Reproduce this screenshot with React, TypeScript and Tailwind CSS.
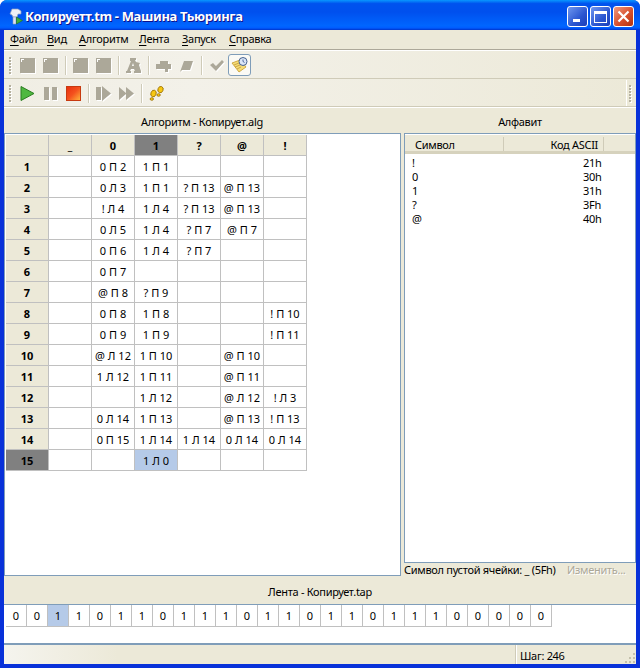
import type { ReactNode } from "react";

const font = "[font-family:'DejaVu_Sans',Tahoma,sans-serif]";

const columns = ["_", "0", "1", "?", "@", "!"];

const rows: string[][] = [
  ["", "0 П 2", "1 П 1", "", "", ""],
  ["", "0 Л 3", "1 П 1", "? П 13", "@ П 13", ""],
  ["", "! Л 4", "1 Л 4", "? П 13", "@ П 13", ""],
  ["", "0 Л 5", "1 Л 4", "? П 7", "@ П 7", ""],
  ["", "0 П 6", "1 Л 4", "? П 7", "", ""],
  ["", "0 П 7", "", "", "", ""],
  ["", "@ П 8", "? П 9", "", "", ""],
  ["", "0 П 8", "1 П 8", "", "", "! П 10"],
  ["", "0 П 9", "1 П 9", "", "", "! П 11"],
  ["", "@ Л 12", "1 П 10", "", "@ П 10", ""],
  ["", "1 Л 12", "1 П 11", "", "@ П 11", ""],
  ["", "", "1 Л 12", "", "@ Л 12", "! Л 3"],
  ["", "0 Л 14", "1 П 13", "", "@ П 13", "! П 13"],
  ["", "0 П 15", "1 Л 14", "1 Л 14", "0 Л 14", "0 Л 14"],
  ["", "", "1 Л 0", "", "", ""],
];

const alphabet = [
  ["!", "21h"],
  ["0", "30h"],
  ["1", "31h"],
  ["?", "3Fh"],
  ["@", "40h"],
];

const tape = "00110110111011011011100000".split("");

const menu = ["Файл", "Вид", "Алгоритм", "Лента", "Запуск", "Справка"];
const menuWidths = ["w-[37px]", "w-[32px]", "w-[60px]", "w-[43px]", "w-[47px]", "w-[50px]"];

function Grip() {
  return (
    <div className="flex w-[3px] flex-col gap-[1px] py-[1px]">
      {Array.from({ length: 6 }).map((_, i) => (
        <div key={i} className="h-[2px] w-[2px] bg-[#b5b19f] shadow-[1px_1px_0_#fff]" />
      ))}
    </div>
  );
}

function Sep() {
  return <div className="mx-[3px] h-[19px] w-[1px] bg-[#cfcbb8] shadow-[1px_0_0_#fff]" />;
}

function Slot({ children }: { children: ReactNode }) {
  return <div className="flex h-[22px] w-[23px] items-center justify-center">{children}</div>;
}

function Disabled({ d, notch }: { d: string; notch?: boolean }) {
  return (
    <svg width="15" height="15" viewBox="0 0 15 15" className="overflow-visible drop-shadow-[1px_1px_0_#fff]">
      <path d={d} fill="#aca899" />
      {notch && <path d="M1 1h3v1H2v2H1z" fill="#fff" />}
    </svg>
  );
}

const blank = "M0 0H15V15H0Z";

function Toolbar({ children }: { children: ReactNode }) {
  return (
    <div className="flex h-[28px] items-center border-b border-[#cfcbb8] bg-[linear-gradient(90deg,#f0eee4_0%,#f3f1e9_30%,#ece9d8_100%)] pt-[1px] pl-[5px]">
      <div className="mr-[4px]">
        <Grip />
      </div>
      {children}
    </div>
  );
}

function Cell({ children, className = "" }: { children?: ReactNode; className?: string }) {
  return (
    <div className={`flex items-center justify-center border-r border-b border-[#c0c0c0] text-[11px] tracking-normal whitespace-nowrap ${className}`}>
      {children}
    </div>
  );
}

export default function App() {
  return (
    <div className={`${font} h-[668px] w-[640px] overflow-hidden rounded-t-[7px] bg-[#0831d9] text-[11px] leading-none tracking-[-0.3px] text-black`}>
      {/* Title bar */}
      <div className="flex h-[30px] items-center bg-[linear-gradient(180deg,#0997ff_0,#0053ee_12%,#0050ee_40%,#0066ff_86%,#005bff_94%,#003dd7_97%,#003dd7_100%)] pt-[3px] pr-[6px] pl-[7px]">
        <svg width="18" height="18" viewBox="0 0 18 18">
          <path d="M5 1h6l3 2v3h-3l-1 3H6L5 7 3 6z" fill="#eef0f6" stroke="#8f9fc0" strokeWidth="0.7" />
          <path d="M6 9h3v7H6z" fill="#dfe3ee" stroke="#8f9fc0" strokeWidth="0.6" />
          <path d="M9.5 9l6 3.5-6 3.5z" fill="#3fae3a" stroke="#1e6e1e" strokeWidth="0.6" />
        </svg>
        <span className="text-[13px] font-bold tracking-[-0.35px] text-white [text-shadow:1px_1px_0_#0f1089]">
          Копируетт.tm - Машина Тьюринга
        </span>
        <div className="ml-auto flex gap-[2px]">
          <div className="flex h-[21px] w-[21px] items-end rounded-[3px] border border-white bg-[linear-gradient(135deg,#6f97ef,#2a55d0_60%,#1c3fb8)] pb-[4px] pl-[5px]">
            <div className="h-[3px] w-[7px] bg-white" />
          </div>
          <div className="flex h-[21px] w-[21px] items-center justify-center rounded-[3px] border border-white bg-[linear-gradient(135deg,#6f97ef,#2a55d0_60%,#1c3fb8)]">
            <div className="h-[12px] w-[13px] border border-t-[3px] border-white" />
          </div>
          <div className="flex h-[21px] w-[21px] items-center justify-center rounded-[3px] border border-white bg-[linear-gradient(135deg,#ee9a80,#d8502e_55%,#b3320f)]">
            <svg width="13" height="13" viewBox="0 0 13 13">
              <path d="M1.5 1.5l10 10M11.5 1.5l-10 10" stroke="#fff" strokeWidth="2.2" />
            </svg>
          </div>
        </div>
      </div>

      <div className="mx-[4px] flex h-[634px] flex-col bg-[#ece9d8]">
        {/* Menu */}
        <div className="flex h-[20px] items-center border-b border-[#aca899] pb-[2px] pl-[6px] shadow-[0_1px_0_#fff]">
          {menu.map((m, i) => (
            <span key={m} className={menuWidths[i]}>
              <span className="underline underline-offset-2">{m[0]}</span>
              {m.slice(1)}
            </span>
          ))}
        </div>
        <div className="h-[1px]" />

        <Toolbar>
          <Slot><Disabled d={blank} notch /></Slot>
          <Slot><Disabled d={blank} notch /></Slot>
          <Sep />
          <Slot><Disabled d={blank} notch /></Slot>
          <Slot><Disabled d={blank} notch /></Slot>
          <Sep />
          <Slot>
            <Disabled d="M4 0h6v2H9l1 2 4 1-1 2 2 6v2H8v-2h1l-1-2H5l-1 2h1v2H0v-2h1L5 3H4z M6 8h2L7 5z" />
          </Slot>
          <Sep />
          <Slot><Disabled d="M4 3h8v3h3v5h-3v3H9v-3H0V6h4z" /></Slot>
          <Slot><Disabled d="M5 3h9L11 12H3L1 14z" /></Slot>
          <Sep />
          <Slot><Disabled d="M1 7l3-2 3 3 6-6 2 2-8 9z" /></Slot>
          <div className="flex h-[22px] w-[23px] items-center justify-center rounded-[3px] border border-[#7f9db9] bg-[#fbfaf5]">
            <svg width="17" height="17" viewBox="0 0 17 17">
              <path d="M1 6l8-3 6 7-7 5z" fill="#f6dc74" stroke="#c79a2c" strokeWidth="0.8" />
              <path d="M3 8l5-2M4 10l5-2M6 12l4-2" stroke="#b98f30" strokeWidth="0.7" />
              <circle cx="12" cy="4.5" r="4" fill="#dbe6f6" stroke="#46618f" strokeWidth="1" />
              <path d="M12 2.5v2l1.5 1" stroke="#2c4a88" strokeWidth="0.8" fill="none" />
            </svg>
          </div>
        </Toolbar>

        <Toolbar>
          <Slot>
            <svg width="15" height="15" viewBox="0 0 15 15">
              <path d="M1 0.5L14 7.5 1 14.5z" fill="#4fb840" stroke="#2a7c20" />
            </svg>
          </Slot>
          <Slot><Disabled d="M1 1h5v13H1z M9 1h5v13H9z" /></Slot>
          <Slot>
            <div className="h-[15px] w-[15px] border border-[#c73a10] bg-[linear-gradient(135deg,#e8300f,#f4511e_50%,#ffb13a)]" />
          </Slot>
          <Sep />
          <Slot><Disabled d="M0 1h5v13H0z M6 0l9 7.5L6 15z" /></Slot>
          <Slot><Disabled d="M0 1l7 6V1l8 6.5L7 14V8l-7 6z" /></Slot>
          <Sep />
          <Slot>
            <svg width="15" height="15" viewBox="0 0 15 15">
              <g fill="#f7c812" stroke="#9a6f05" strokeWidth="0.8">
                <ellipse cx="4.5" cy="7.5" rx="2.6" ry="3.4" transform="rotate(20 4.5 7.5)" />
                <ellipse cx="2.8" cy="13" rx="1.7" ry="1.3" />
                <ellipse cx="11.5" cy="3.6" rx="2.6" ry="3.2" transform="rotate(20 11.5 3.6)" />
                <ellipse cx="9.6" cy="9" rx="1.7" ry="1.3" />
              </g>
            </svg>
          </Slot>
          <div className="mr-[4px] ml-auto flex h-full items-center border-l border-white pl-[2px]">
            <Grip />
          </div>
        </Toolbar>

        {/* Panels */}
        <div className="flex h-[26px] items-center border-t border-white">
          <div className="w-[396px] pt-[1px] text-center">Алгоритм - Копирует.alg</div>
          <div className="ml-[4px] flex-1 pt-[1px] text-center">Алфавит</div>
        </div>

        <div className="flex h-[443px] gap-[3px]">
          <div className="h-full w-[397px] border border-[#7f9db9] bg-white pt-[1px] pl-[1px]">
            <div className="grid grid-cols-[repeat(7,43px)] auto-rows-[21px]">
              <Cell className="border-[#808080] bg-[#ece9d8]" />
              {columns.map((c) => (
                <Cell
                  key={c}
                  className={`border-[#808080] font-bold ${c === "1" ? "bg-[#808080]" : "bg-[#ece9d8]"}`}
                >
                  {c}
                </Cell>
              ))}
              {rows.map((row, i) => (
                <div key={i} className="contents">
                  <Cell className={`border-[#808080] font-bold ${i === 14 ? "bg-[#808080]" : "bg-[#ece9d8]"}`}>
                    {i + 1}
                  </Cell>
                  {row.map((v, j) => (
                    <Cell key={j} className={i === 14 && j === 2 ? "bg-[#b5cae8]" : ""}>
                      {v}
                    </Cell>
                  ))}
                </div>
              ))}
            </div>
          </div>

          <div className="flex flex-1 flex-col">
            <div className="h-[430px] border border-[#7f9db9] bg-white pt-[1px]">
              <div className="flex h-[19px] items-center border-b-[3px] border-[#d6d2bd] bg-[#ece9d8] pt-[2px]">
                <div className="flex h-[14px] w-[99px] items-center border-r border-[#cfcbb8] pl-[10px]">Символ</div>
                <div className="flex h-[14px] w-[100px] items-center justify-end border-r border-[#cfcbb8] pr-[5px]">Код ASCII</div>
              </div>
              <div className="pt-[1px]">
                {alphabet.map(([s, code]) => (
                  <div key={s} className="flex h-[14px] items-center pl-[7px]">
                    <span className="w-[171px]">{s}</span>
                    <span>{code}</span>
                  </div>
                ))}
              </div>
            </div>
            <div className="flex flex-1 items-center">
              <span className="w-[163px] whitespace-nowrap">Символ пустой ячейки: _ (5Fh)</span>
              <span className="text-[#aca899] [text-shadow:1px_1px_0_#fff]">Изменить...</span>
            </div>
          </div>
        </div>

        <div className="flex h-[28px] items-center justify-center pt-[3px]">Лента - Копирует.tap</div>

        <div className="h-[41px] border-t border-b-2 border-[#7f9db9] bg-white pl-[2px]">
          <div className="flex h-[22px]">
            {tape.map((v, i) => (
              <Cell key={i} className={`w-[21px] ${i === 2 ? "bg-[#b5cae8]" : ""}`}>
                {v}
              </Cell>
            ))}
          </div>
        </div>

        <div className="flex h-[19px] items-center bg-[linear-gradient(90deg,#f5f4ee_0%,#ece9d8_18%)]">
          <div className="w-[511px]" />
          <div className="flex h-full flex-1 items-center border-l border-[#cfcbb8] pt-[2px] pl-[4px] shadow-[inset_1px_0_0_#fff]">
            Шаг: 246
          </div>
          <svg className="mt-auto" width="12" height="12" viewBox="0 0 12 12">
            <path d="M9 1h2v2H9z M5 5h2v2H5z M9 5h2v2H9z M1 9h2v2H1z M5 9h2v2H5z M9 9h2v2H9z" fill="#c4c0ab" />
          </svg>
        </div>
      </div>
    </div>
  );
}
